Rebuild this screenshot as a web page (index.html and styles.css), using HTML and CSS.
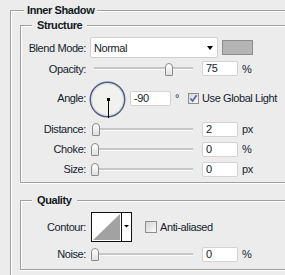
FILE: index.html
```html
<!DOCTYPE html>
<html>
<head>
<meta charset="utf-8">
<link rel="stylesheet" href="styles.css">
</head>
<body>
<fieldset class="group outer">
  <legend class="legend-outer">Inner Shadow</legend>
  <fieldset class="group sub structure">
    <legend class="legend-sub">Structure</legend>
    <div class="row row-blend">
      <span class="lbl">Blend Mode:</span>
      <div class="select"><span>Normal</span><span class="caret"></span></div>
      <div class="swatch"></div>
    </div>
    <div class="row row-opacity">
      <span class="lbl">Opacity:</span>
      <div class="slider"><div class="track"></div><span class="thumb" style="left:74px"></span></div>
      <div class="field">75</div>
      <span class="unit">%</span>
    </div>
    <div class="row row-angle">
      <span class="lbl">Angle:</span>
      <svg class="dial" width="37" height="37" viewBox="0 0 37 37">
        <circle cx="18.5" cy="18.5" r="17.2" fill="#f1f1ed" stroke="#4d5d86" stroke-width="1.5"/>
        <circle cx="18.5" cy="18.5" r="15.9" fill="none" stroke="#cdd2de" stroke-width="0.8"/>
        <line x1="19.5" y1="19" x2="19.5" y2="37" stroke="#000" stroke-width="1"/>
        <rect x="18" y="17" width="3" height="3" fill="#000"/>
      </svg>
      <div class="field field-angle">-90</div>
      <span class="unit deg">°</span>
      <span class="check">
        <svg width="9" height="9" viewBox="0 0 9 9"><path d="M1.5 4.5 L3.6 7 L7.6 1.2" fill="none" stroke="#4a62a6" stroke-width="1.6"/></svg>
      </span>
      <span class="check-label">Use Global Light</span>
    </div>
    <div class="row row-std">
      <span class="lbl">Distance:</span>
      <div class="slider"><div class="track"></div><span class="thumb" style="left:1px"></span></div>
      <div class="field">2</div>
      <span class="unit">px</span>
    </div>
    <div class="row row-std">
      <span class="lbl">Choke:</span>
      <div class="slider"><div class="track"></div><span class="thumb" style="left:0px"></span></div>
      <div class="field">0</div>
      <span class="unit">%</span>
    </div>
    <div class="row row-std">
      <span class="lbl">Size:</span>
      <div class="slider"><div class="track"></div><span class="thumb" style="left:0px"></span></div>
      <div class="field">0</div>
      <span class="unit">px</span>
    </div>
  </fieldset>
  <fieldset class="group sub quality">
    <legend class="legend-sub">Quality</legend>
    <div class="row row-contour">
      <span class="lbl">Contour:</span>
      <svg class="contour" width="41" height="30" viewBox="0 0 41 30">
        <rect x="0.5" y="0.5" width="40" height="29" fill="#fff" stroke="#111"/>
        <polygon points="2,28 29,2 29,28" fill="#a2a2a2"/>
        <line x1="30.5" y1="0" x2="30.5" y2="30" stroke="#111"/>
        <polygon points="33,13 38,13 35.5,15.5" fill="#000"/>
      </svg>
      <span class="check check-aa"></span>
      <span class="check-label">Anti-aliased</span>
    </div>
    <div class="row row-std">
      <span class="lbl">Noise:</span>
      <div class="slider"><div class="track"></div><span class="thumb" style="left:0px"></span></div>
      <div class="field">0</div>
      <span class="unit">%</span>
    </div>
  </fieldset>
</fieldset>
</body>
</html>
```

FILE: styles.css
```css
html, body {
  margin: 0;
  background: #ececec;
}
body {
  width: 285px;
  height: 275px;
  overflow: hidden;
  font-family: "Liberation Sans", Arial, sans-serif;
  font-size: 11px;
  letter-spacing: -0.4px;
  color: #141c2c;
}
.group {
  margin: 0;
  padding: 0;
  border: 1px solid #a0a0a0;
  border-right: none;
  box-shadow: inset 1px 1px 0 #fff, 0 1px 0 #fff;
  min-width: 0;
}
.outer {
  box-sizing: border-box;
  margin: 4px 0 0 10px;
  padding: 2px 0 0 9px;
  width: 275px;
  height: 271px;
  border-bottom: none;
  box-shadow: inset 1px 1px 0 #fff;
}
.legend-outer,
.legend-sub {
  font-weight: bold;
  line-height: 13px;
  background: #ececec;
  color: #111822;
}
.legend-outer {
  margin-left: 4px;
  padding: 0 3px;
}
.legend-sub {
  margin-left: 11px;
  padding: 0 5px;
}
.structure {
  padding: 3px 0 3px 0;
}
.quality {
  margin-top: 11px;
  padding: 3px 0 5px 0;
}
.row {
  display: flex;
  align-items: center;
  white-space: nowrap;
}
.row-blend { height: 25px; }
.row-opacity { height: 17px; }
.row-angle { height: 42px; }
.row-std { height: 20px; }
.row-contour { height: 34px; }

.lbl {
  flex: none;
  width: 65px;
  margin-right: 4px;
  text-align: right;
}
.select {
  flex: none;
  box-sizing: border-box;
  width: 128px;
  height: 21px;
  border: 1px solid #cfcfcf;
  border-radius: 2px;
  background: #fff;
  display: flex;
  align-items: center;
  justify-content: space-between;
  padding: 1px 4px 0 3px;
}
.caret {
  width: 0;
  height: 0;
  border-left: 3.5px solid transparent;
  border-right: 3.5px solid transparent;
  border-top: 4px solid #000;
}
.swatch {
  flex: none;
  box-sizing: border-box;
  width: 31px;
  height: 15px;
  margin-left: 4px;
  background: #b4b4b4;
  border: 1px solid #8d8d8d;
}
.slider {
  flex: none;
  position: relative;
  width: 102px;
  height: 14px;
  margin-left: 1px;
  display: flex;
  align-items: center;
}
.track {
  flex: 1;
  margin-left: 3px;
  height: 2px;
  background: #c6c6c6;
  border-bottom: 1px solid #fafafa;
}
.thumb {
  position: absolute;
  top: 1px;
  width: 6px;
  height: 11px;
  border: 1px solid #8b8b8b;
  border-radius: 4px 4px 1px 1px;
  background: linear-gradient(#ffffff, #e0e0e0);
}
.field {
  flex: none;
  box-sizing: border-box;
  width: 36px;
  height: 15px;
  margin-left: 9px;
  padding-left: 3px;
  border: 1px solid #d3d3d3;
  border-radius: 2px;
  background: #fff;
  line-height: 13px;
}
.unit {
  margin-left: 4px;
}
.dial {
  flex: none;
  margin-left: -1px;
  margin-top: 2px;
}
.field-angle {
  width: 41px;
  margin-left: 4px;
}
.deg {
  margin-left: 4px;
}
.check {
  flex: none;
  box-sizing: border-box;
  width: 11px;
  height: 11px;
  margin-left: 9px;
  border: 1px solid #8e8e8e;
  background: linear-gradient(135deg, #d4d4d4, #fbfbfb);
  display: flex;
}
.check-aa {
  width: 12px;
  height: 12px;
  margin-left: 13px;
}
.check-label {
  margin-left: 3px;
}
.contour {
  flex: none;
  margin-left: 1px;
}
```
